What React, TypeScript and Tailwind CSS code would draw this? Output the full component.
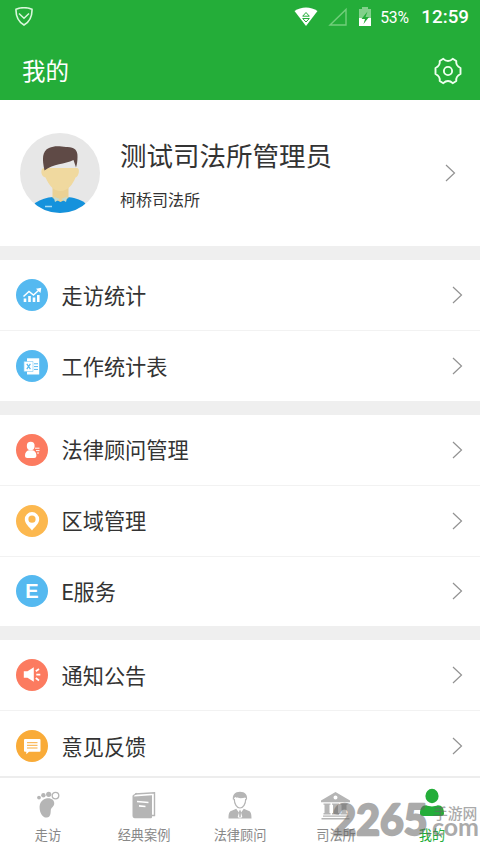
import type { ReactNode } from 'react';

interface MenuItem {
  label: string;
  color: string;
  icon: ReactNode;
}

const groups: MenuItem[][] = [
  [
    {
      label: '走访统计',
      color: 'bg-[#55b9f0]',
      icon: (
        <>
          <path d="M9 19.5V23M13.5 17V23M18 18.5V23M22.3 16V23" stroke="#fff" strokeWidth="2.6" />
          <path d="M7.500 17.500l5.500-5 4.500 3.500 6-5.500" fill="none" stroke="#fff" strokeWidth="1.5" />
          <path d="M20 9.800l5.300-1-.8 5.300z" fill="#fff" />
        </>
      ),
    },
    {
      label: '工作统计表',
      color: 'bg-[#55b9f0]',
      icon: (
        <>
          <path d="M11 8.3h12.2V24.5H11z" fill="#fff" />
          <path d="M18 13.8h4M18 16.6h4M18 19.4h4" stroke="#55b9f0" strokeWidth="1" />
          <path d="M8 11.5h9v10H8z" fill="#fff" stroke="#8dd0f5" strokeWidth=".7" />
          <path d="M10.8 13.8l3.6 5.4M14.4 13.8l-3.6 5.4" stroke="#55b9f0" strokeWidth="1.2" />
        </>
      ),
    },
  ],
  [
    {
      label: '法律顾问管理',
      color: 'bg-[#fc7b60]',
      icon: (
        <>
          <ellipse cx="14.7" cy="12" rx="3.900" ry="4.200" fill="#fff" />
          <path d="M9 21.500c0-3 1.500-4.800 4-5.300h3.400c2.500.500 4 2.300 4 5.300 0 1.800-1 2.500-2.200 2.500h-7C9.900 24 9 23.300 9 21.500z" fill="#fff" />
          <path d="M19 14.200h4.500M20 16.600h3.500M21 19h2" stroke="#fff" strokeWidth="1" />
        </>
      ),
    },
    {
      label: '区域管理',
      color: 'bg-[#fcb84f]',
      icon: (
        <path
          fillRule="evenodd"
          d="M16 25.500c-3-3.700-7.200-7-7.200-11.200a7.200 7.200 0 0 1 14.400 0c0 4.200-4.200 7.500-7.200 11.200zM16 10.600a3.600 3.600 0 1 0 0 7.200 3.600 3.600 0 0 0 0-7.200z"
          fill="#fff"
        />
      ),
    },
    {
      label: 'E服务',
      color: 'bg-[#55b9f0]',
      icon: (
        <text x="16" y="23" textAnchor="middle" fill="#fff" fontSize="20" fontWeight="700" fontFamily="Liberation Sans, sans-serif">
          E
        </text>
      ),
    },
  ],
  [
    {
      label: '通知公告',
      color: 'bg-[#fc7b60]',
      icon: (
        <>
          <path d="M7.800 12.300h3.700l6.300-4v14.500l-6.300-4H7.800z" fill="#fff" />
          <path d="M19.800 12.300l3.200-2.300M20.300 15.700h4M19.800 19l3.200 2.500" stroke="#fff" strokeWidth="1.700" />
        </>
      ),
    },
    {
      label: '意见反馈',
      color: 'bg-[#f9ab38]',
      icon: (
        <>
          <path d="M9 9h14.500q1 0 1 1v10.700q0 1-1 1H13l-2.700 2.500v-2.500H9q-1 0-1-1V10q0-1 1-1z" fill="#fff" />
          <path d="M11 12.700h10.500M11 15.300h10.500M11 18h10.500" stroke="#f9ab38" strokeWidth="1" />
        </>
      ),
    },
  ],
];

const tabs = [
  {
    label: '走访',
    icon: (
      <>
        <path d="M14 7.500c5-1 8.800 1.500 8.200 5.500-.4 3-3.200 3.500-3.400 6-.2 3 0 7.300-4 7.600-4.400.2-7-4.800-7.200-9.600C7.400 12 10 8.500 14 7.500z" />
        <circle cx="7" cy="6.600" r="1.900" />
        <circle cx="11.400" cy="4.300" r="2.200" />
        <circle cx="16.700" cy="3.300" r="2.600" />
        <circle cx="23.500" cy="4.600" r="3.300" fill="none" stroke="#b5b5b5" strokeWidth="1.300" />
      </>
    ),
  },
  {
    label: '经典案例',
    icon: (
      <>
        <path d="M7 3L26.500 1.700v22.800h-2.500" fill="none" stroke="#b5b5b5" strokeWidth="1.400" />
        <path d="M4.500 4.500L6.500 5.500 24 4.300V26q0 1.200-1 1.200H6.500Q4.500 27 4.500 25z" />
        <path d="M5 4.700L9 2.300" stroke="#b5b5b5" strokeWidth="1.300" />
        <path d="M9 10.500l11.500 1M11 14.900l6.500.600" stroke="#fff" strokeWidth="1.600" />
      </>
    ),
  },
  {
    label: '法律顾问',
    icon: (
      <>
        <path d="M10.300 8c0 5 2.500 9 5.700 9s5.700-4 5.700-9" fill="none" stroke="#b5b5b5" strokeWidth="1.200" />
        <path d="M9 9.500C8 3.500 11 .700 16 .700S24 3.500 22.900 9.500l-1.600-3c-3 1-7.500 1-10.300-.5z" />
        <path d="M4.500 27.500c0-5 .7-7 3.200-7.800l4.500-2L16 23l3.800-5.300 4.500 2c2.500.8 3.200 2.800 3.200 7.800z" />
        <path d="M16 18l-2.300 8 2.300 1.500 2.300-1.500z" fill="#fff" />
        <path d="M16 18.500l-1 2 .300 6h1.400l.300-6z" />
      </>
    ),
  },
  {
    label: '司法所',
    icon: (
      <>
        <path fillRule="evenodd" d="M15.500 1L30 9.500v1.800H1V9.500zM15.500 4.500a2 2 0 1 0 0 4 2 2 0 0 0 0-4z" />
        <path d="M3.500 12.500h7v1.300h-1V22h1v1.500h-7V22h1v-8.200h-1zM12 12.500h7v1.300h-1V22h1v1.500h-7V22h1v-8.200h-1zM20.500 12.500h7v1.300h-1V22h1v1.500h-7V22h1v-8.200h-1z" />
        <path d="M3 24.500h25.500v1.200H3zM1.500 27h28v1.500h-28z" />
      </>
    ),
  },
  {
    label: '我的',
    active: true,
    icon: (
      <>
        <ellipse cx="16" cy="5" rx="6.600" ry="7.200" />
        <path d="M4 22.500c0-5 2-8.200 6.200-8.200 3 1.500 8.600 1.500 11.600 0 4.200 0 6.200 3.200 6.200 8.200 0 1.500-1 2.500-3 2.500H7c-2 0-3-1-3-2.500z" />
      </>
    ),
  },
];

function Chevron() {
  return (
    <svg className="h-[18px] w-[11px] shrink-0" viewBox="0 0 11 18" fill="none" stroke="#929292" strokeWidth="1.200">
      <path d="M1 1l8.500 8L1 17" />
    </svg>
  );
}

function StatusBar() {
  return (
    <div className="flex h-[34px] items-center pl-[14px] pr-[11px] text-white">
      <svg className="h-5 w-5" viewBox="0 0 20 20" fill="none" stroke="#d9f8dc" strokeWidth="1.600">
        <path d="M2 2.200Q10-.800 18 2.200C18.300 10.500 15 15 10 18 5 15 1.700 10.500 2 2.200z" />
        <path d="M5 6.500l5 4.700 5-4.700" strokeWidth="1.500" />
      </svg>
      <svg className="ml-auto h-5 w-6" viewBox="0 0 24 20">
        <path d="M.500 4C7-.800 17-.800 23.500 4L12 19z" fill="#fff" />
        <path d="M12 5.500l3.300 3.700H8.700zM8.700 11.500h6.600L12 15z" fill="none" stroke="#24ad39" strokeWidth="1" />
      </svg>
      <svg className="ml-[10px] h-5 w-5" viewBox="0 0 20 20">
        <path d="M2 18L18 2.500V18z" fill="none" stroke="#72ce7b" strokeWidth="1.400" />
      </svg>
      <svg className="ml-[9px] h-5 w-[16px]" viewBox="0 0 16 20">
        <path d="M5 0h6v2h3v9H2V2h3z" fill="#82d18b" />
        <path d="M2 11h12v8H2z" fill="#fff" />
        <path d="M10.500 4.500L4.500 12H8l-1.500 5 5.500-7H8.500z" fill="#24ad39" />
      </svg>
      <span className="ml-[7px] mt-[2px] w-[29px] whitespace-nowrap font-[Roboto] text-[15.700px] leading-5 tracking-[-0.300px]">53%</span>
      <span className="ml-3 font-[Roboto] text-[18.800px] font-medium leading-none">12:59</span>
    </div>
  );
}

function Avatar() {
  return (
    <svg className="h-20 w-20 shrink-0" viewBox="0 0 80 80">
      <defs>
        <clipPath id="avatar">
          <circle cx="40" cy="40" r="40" />
        </clipPath>
      </defs>
      <g clipPath="url(#avatar)">
        <path d="M0 0h80v80H0z" fill="#e7e7e7" />
        <path d="M10 80l5-10c6-4 12-5.500 18-6h14c6 .500 13 2 18 6l5 10z" fill="#1592dc" />
        <path d="M32.500 53h16v12l-8 4-8-4z" fill="#ebd194" />
        <path d="M24 35h33c3 0 2.500 8-1.500 9.500C53 51 48 58 40.500 58S29 52 25.500 44.500C20 43 20.500 35 24 35z" fill="#f0d99f" />
        <path d="M24.500 37.500C22 26 22 18 29 15c6-3 12-1.500 17-1 8-.500 12 3 11.500 10 0 4-.500 7-1.500 10.500L53.500 27c-9 4.500-20 3.500-29 10.500z" fill="#5f4a46" />
        <path d="M33.500 63.500l6.500 2.500-5 3zM47.500 63.500l-6.500 2.500 5 3z" fill="#c5dbcf" />
        <path d="M25 73.500h7" stroke="#a6dcf5" strokeWidth="1.400" />
      </g>
    </svg>
  );
}

// Site mark that floats over the right end of the tab bar
function Watermark() {
  return (
    <svg className="pointer-events-none absolute bottom-0 right-0 h-[60px] w-[160px]" viewBox="0 0 160 60" fill="#666" opacity=".55">
      <text
        x="12.500"
        y="42"
        fontSize="42"
        fontWeight="700"
        fontFamily="Lato, sans-serif"
        textLength="95"
        lengthAdjust="spacingAndGlyphs"
        stroke="#666"
        strokeWidth="2.400"
        strokeLinejoin="round"
      >
        2265
      </text>
      <text x="106" y="43" fontSize="25" fontWeight="700" fontFamily="Lato, sans-serif" textLength="53" lengthAdjust="spacingAndGlyphs">
        .com
      </text>
      <text x="113" y="26" fontSize="14.800" fontWeight="500" fontFamily="Noto Sans CJK SC, sans-serif">手游网</text>
    </svg>
  );
}

export default function App() {
  return (
    <div className="relative flex h-[853px] w-[480px] flex-col overflow-hidden bg-white font-[Roboto,'Noto_Sans_CJK_SC',sans-serif] text-[#333]">
      <header className="h-[100px] shrink-0 bg-[#24ad39]">
        <StatusBar />
        <div className="flex h-[66px] items-center justify-between pl-[22px] pr-[18px] pt-[7px] text-white">
          <h1 className="pt-[2px] text-[23.500px] leading-8">我的</h1>
          <svg className="h-7 w-7" viewBox="0 0 28 28" fill="none" stroke="#edffee" strokeWidth="1.900" strokeLinejoin="round">
            <path d="M9.300 1.800Q11.500 4 14 4T18.700 1.800L22.300 4Q21.500 8.500 26.500 11v6Q21.500 19.500 22.300 24l-3.600 2.200Q16.500 24 14 24T9.300 26.200L5.700 24Q6.500 19.500 1.500 17v-6Q6.500 8.500 5.700 4z" />
            <circle cx="14" cy="14" r="4.100" />
          </svg>
        </div>
      </header>

      <section className="flex h-[146px] shrink-0 items-center pl-5 pr-[24px]">
        <Avatar />
        <div className="ml-5 flex-1 pt-[6px]">
          <p className="text-[26.500px] leading-[36px]">测试司法所管理员</p>
          <p className="mt-[14px] text-base leading-6">柯桥司法所</p>
        </div>
        <Chevron />
      </section>

      <main className="min-h-0 flex-1 overflow-hidden">
        {groups.map((items, i) => (
          <ul key={i} className="border-t-[14px] border-[#efefef]">
            {items.map((item, j) => (
              <li
                key={item.label}
                className={`flex h-[70.400px] items-center pl-4 pr-[17px] ${j > 0 ? 'border-t border-[#f2f2f2]' : ''}`}
              >
                <div className={`h-8 w-8 rounded-full ${item.color}`}>
                  <svg viewBox="0 0 32 32">{item.icon}</svg>
                </div>
                <span className="ml-[13.500px] flex-1 pt-[3px] text-[21.200px] leading-8">{item.label}</span>
                <Chevron />
              </li>
            ))}
          </ul>
        ))}
      </main>

      <nav className="grid h-[77px] shrink-0 grid-cols-5 border-t-2 border-[#ededed] bg-white">
        {tabs.map((tab) => (
          <div
            key={tab.label}
            className={`flex flex-col items-center pt-[13px] ${tab.active ? 'text-[#24ad39]' : 'text-[#888]'}`}
          >
            <svg className={`h-[30px] w-8 ${tab.active ? 'fill-[#24ad39]' : 'fill-[#b5b5b5]'}`} viewBox="0 0 32 30" overflow="visible">
              {tab.icon}
            </svg>
            <span className="mt-[5px] text-[13.200px] leading-5">{tab.label}</span>
          </div>
        ))}
      </nav>
      <Watermark />
    </div>
  );
}
